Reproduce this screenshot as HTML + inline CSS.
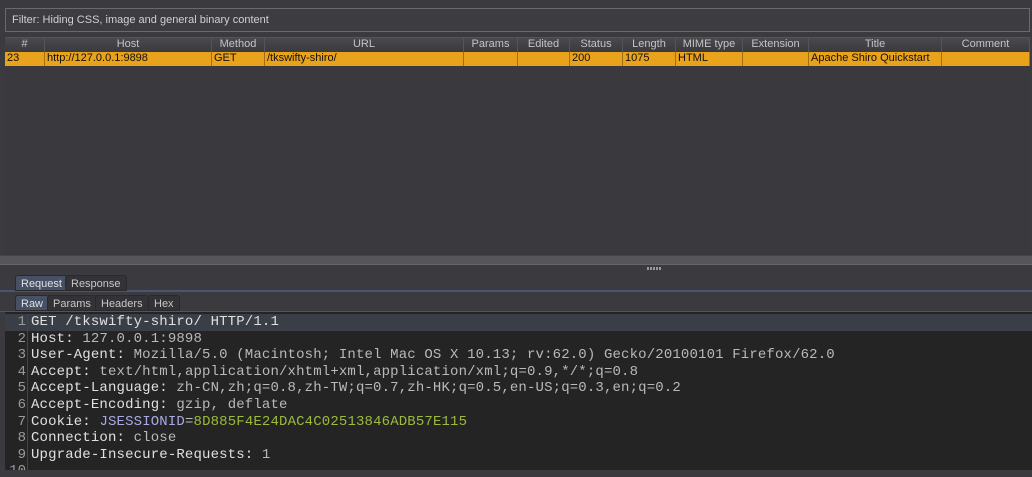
<!DOCTYPE html>
<html><head><style>
*{margin:0;padding:0;box-sizing:border-box}
body{width:1032px;height:477px;background:#3b3b3f;font-family:"Liberation Sans",sans-serif;position:relative;overflow:hidden}
.filter{position:absolute;left:5px;top:8px;width:1025px;height:24px;border:1px solid #6a6a6e;background:#3d3d41;color:#d0d0d0;font-size:11px;line-height:22px;padding-left:6px}
.tbl{position:absolute;left:5px;top:37px;width:1025px;height:221px;background:#3a3a3e;border-top:1px solid #555}
.row{position:absolute;left:0;height:14px;display:flex;font-size:11px;line-height:13px}
.row div{border-right:1px solid #2a2a2a;overflow:hidden;white-space:nowrap}
.hdr{top:0;background:linear-gradient(#4a4a4e,#3a3a3e);color:#c4c4c4}
.hdr div{text-align:center;border-right:1px solid #555}
.dat{top:14px;background:#e8a21c;color:#111}
.dat div{padding-left:2px;border-right:1px solid #a07010}
.split{position:absolute;left:0;top:255px;width:1032px;height:10px;background:#56565a;border-top:1px solid #444;border-bottom:1px solid #666}
.tab{position:absolute;font-size:11px;color:#c8c8c8;height:16px;line-height:16px;padding:0 5px;border-radius:3px 3px 0 0;background:#333337;border:1px solid #2a2a2e}
.tab.a{background:#465166;color:#e0e0e0}
.ed{position:absolute;left:5px;top:312px;width:1027px;height:158px;background:#242424;font-family:"Liberation Mono",monospace;font-size:14px;letter-spacing:0.15px;color:#b9b9b9;overflow:hidden;padding-top:2px}
.ln{height:16.6px;line-height:16.6px;white-space:pre;display:flex}
.g{width:23px;text-align:right;color:#9a9a9a;border-right:1px solid #444;padding-right:1px;letter-spacing:0}
.t{padding-left:3px}
.k{color:#e0e0e0}
.hl{background:#3a3e46}
</style></head><body>
<div class="filter">Filter: Hiding CSS, image and general binary content</div>
<div class="tbl">
<div class="row hdr"><div style="width:40px">#</div><div style="width:167px">Host</div><div style="width:53px">Method</div><div style="width:199px">URL</div><div style="width:54px">Params</div><div style="width:52px">Edited</div><div style="width:53px">Status</div><div style="width:53px">Length</div><div style="width:67px">MIME type</div><div style="width:66px">Extension</div><div style="width:133px">Title</div><div style="width:88px">Comment</div></div>
<div class="row dat"><div style="width:40px">23</div><div style="width:167px">http://127.0.0.1:9898</div><div style="width:53px">GET</div><div style="width:199px">/tkswifty-shiro/</div><div style="width:54px"></div><div style="width:52px"></div><div style="width:53px">200</div><div style="width:53px">1075</div><div style="width:67px">HTML</div><div style="width:66px"></div><div style="width:133px">Apache Shiro Quickstart</div><div style="width:88px"></div></div>
</div>
<div class="split"></div>
<div style="position:absolute;left:647px;top:267px;width:15px;height:3px;background:repeating-linear-gradient(90deg,#999 0 2px,transparent 2px 3px)"></div>
<div style="position:absolute;left:0;top:290px;width:1032px;height:2px;background:#4a5670"></div>
<div class="tab a" style="left:15px;top:275px">Request</div>
<div class="tab" style="left:65px;top:275px">Response</div>
<div style="position:absolute;left:0;top:311px;width:1032px;height:1px;background:#4a5670"></div>
<div class="tab a" style="left:15px;top:295px">Raw</div>
<div class="tab" style="left:47px;top:295px">Params</div>
<div class="tab" style="left:95px;top:295px">Headers</div>
<div class="tab" style="left:148px;top:295px">Hex</div>
<div class="ed">
<div class="ln hl"><span class="g">1</span><span class="t k">GET /tkswifty-shiro/ HTTP/1.1</span></div>
<div class="ln"><span class="g">2</span><span class="t"><span class="k">Host:</span> 127.0.0.1:9898</span></div>
<div class="ln"><span class="g">3</span><span class="t"><span class="k">User-Agent:</span> Mozilla/5.0 (Macintosh; Intel Mac OS X 10.13; rv:62.0) Gecko/20100101 Firefox/62.0</span></div>
<div class="ln"><span class="g">4</span><span class="t"><span class="k">Accept:</span> text/html,application/xhtml+xml,application/xml;q=0.9,*/*;q=0.8</span></div>
<div class="ln"><span class="g">5</span><span class="t"><span class="k">Accept-Language:</span> zh-CN,zh;q=0.8,zh-TW;q=0.7,zh-HK;q=0.5,en-US;q=0.3,en;q=0.2</span></div>
<div class="ln"><span class="g">6</span><span class="t"><span class="k">Accept-Encoding:</span> gzip, deflate</span></div>
<div class="ln"><span class="g">7</span><span class="t"><span class="k">Cookie:</span> <span style="color:#a9a9e6">JSESSIONID</span>=<span style="color:#9cba3c">8D885F4E24DAC4C02513846ADB57E115</span></span></div>
<div class="ln"><span class="g">8</span><span class="t"><span class="k">Connection:</span> close</span></div>
<div class="ln"><span class="g">9</span><span class="t"><span class="k">Upgrade-Insecure-Requests:</span> 1</span></div>
<div class="ln"><span class="g">10</span><span class="t"></span></div>
</div>
</body></html>
